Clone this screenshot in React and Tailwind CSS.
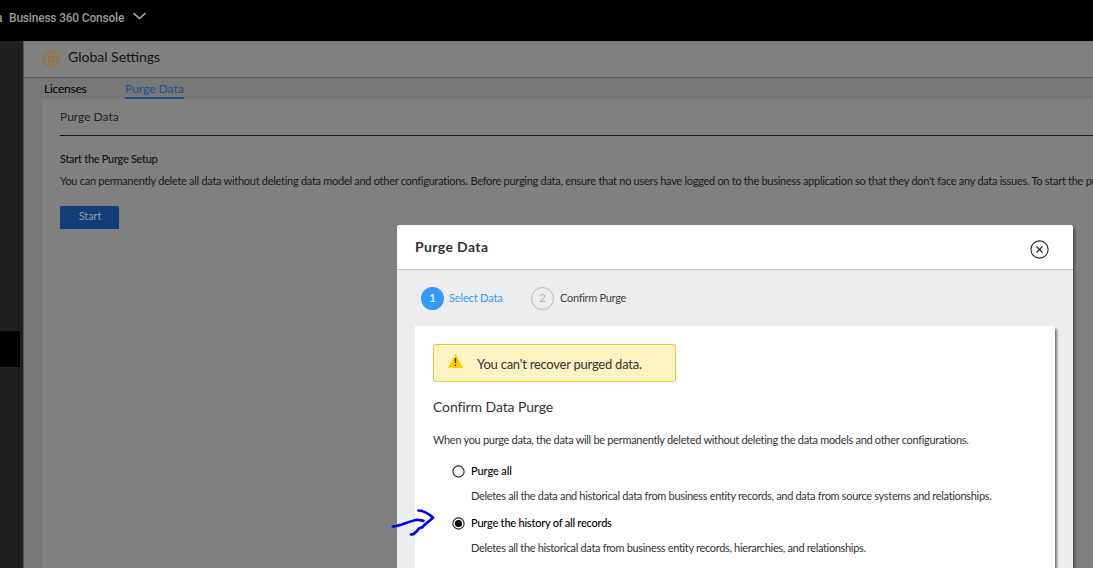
import { useState } from 'react';

const OPTIONS = [
  {
    id: 'all',
    label: 'Purge all',
    labelClass: 'tracking-[-0.1px]',
    text: 'Deletes all the data and historical data from business entity records, and data from source systems and relationships.',
    textClass: 'tracking-[-0.32px]',
  },
  {
    id: 'history',
    label: 'Purge the history of all records',
    labelClass: 'tracking-[-0.22px]',
    text: 'Deletes all the historical data from business entity records, hierarchies, and relationships.',
    textClass: 'tracking-[-0.33px]',
  },
];

function GearIcon() {
  return (
    <svg className="h-[18px] w-[18px] shrink-0" viewBox="0 0 18 18" fill="none" stroke="#a96d18" strokeWidth="1.1">
      <path d="M6.6 3.3a2.4 2.5 0 0 1 4.8 0a2.4 2.4 0 0 1 3.300 3.300a2.500 2.400 0 0 1 0 4.800a2.400 2.400 0 0 1 -3.300 3.300a2.400 2.500 0 0 1 -4.800 0a2.400 2.400 0 0 1 -3.300 -3.300a2.500 2.400 0 0 1 0 -4.800a2.400 2.400 0 0 1 3.300 -3.300z" />
      <circle cx="9" cy="9" r="2.7" />
    </svg>
  );
}

function Radio({ checked, onSelect }) {
  return (
    <button onClick={onSelect} className="mt-[2px] h-[13px] w-[13px] shrink-0">
      <svg viewBox="0 0 13 13" className="block h-[13px] w-[13px]">
        <circle cx="6.5" cy="6.5" r="5.6" fill="#fff" stroke="#222" strokeWidth="1.1" />
        {checked && <circle cx="6.5" cy="6.5" r="3.6" fill="#000" />}
      </svg>
    </button>
  );
}

function PurgeDialog() {
  const [selected, setSelected] = useState('history');

  return (
    <div className="absolute top-[225px] left-[397px] h-[343px] w-[676px] overflow-hidden rounded-t-[3px] bg-[#ededed] shadow-[2px_2px_3px_rgba(0,0,0,0.4)]">
      <div className="flex h-[45px] items-center justify-between border-b border-[#bdbdbd] bg-white pr-6 pl-[18px]">
        <h2 className="text-[14px] leading-5 font-bold tracking-[0.38px] text-[#333]">Purge Data</h2>
        <svg className="mt-1 h-[19px] w-[19px]" viewBox="0 0 19 19" fill="none" stroke="#222" strokeWidth="1.1">
          <circle cx="9.5" cy="9.5" r="8.6" />
          <path d="M6.5 6.5l6 6M12.5 6.5l-6 6" />
        </svg>
      </div>

      {/* Steps */}
      <div className="flex h-[56px] items-center pl-6 text-[11px] leading-4">
        <span className="flex h-[23px] w-[23px] items-center justify-center rounded-full bg-[#3399ff] text-[12px] text-white">1</span>
        <span className="ml-[5px] w-[82px] whitespace-nowrap tracking-[-0.15px] text-[#3399ff]">Select Data</span>
        <span className="flex h-[23px] w-[23px] items-center justify-center rounded-full border border-[#bbb] text-[12px] text-[#b5b5b5]">2</span>
        <span className="ml-[6px] whitespace-nowrap tracking-[-0.3px] text-[#444]">Confirm Purge</span>
      </div>

      <div className="ml-[18px] h-[260px] w-[640px] bg-white px-[18px] pt-[18px] shadow-[2px_3px_2px_#777]">
        <div className="flex h-[38px] w-[243px] items-center rounded-[3px] border border-[#f7c02c] bg-[#fbf3c1] pl-[14px]">
          <svg className="-mt-1 h-[14px] w-[15px]" viewBox="0 0 15 14">
            <path d="M7.5 0L15 14H0z" fill="#fdd000" />
            <path d="M7.5 4v5M7.5 10.5v1.5" stroke="#222" strokeWidth="1.3" />
          </svg>
          <span className="mt-px ml-[14px] whitespace-nowrap text-[13px] leading-4 tracking-[-0.24px] text-[#333]">You can't recover purged data.</span>
        </div>

        <h3 className="mt-[15px] text-[14px] leading-5 tracking-[-0.1px] text-[#333]">Confirm Data Purge</h3>
        <p className="mt-[15px] whitespace-nowrap text-[11px] leading-4 tracking-[-0.3px] text-[#333]">
          When you purge data, the data will be permanently deleted without deleting the data models and other configurations.
        </p>

        <div className="mt-[15px] pl-[19px]">
          {OPTIONS.map(o => (
            <div key={o.id} className="flex h-[52px] gap-[6px] text-[11px] leading-4 whitespace-nowrap">
              <Radio checked={selected === o.id} onSelect={() => setSelected(o.id)} />
              <div>
                <p className={`font-medium text-black ${o.labelClass}`}>{o.label}</p>
                <p className={`mt-[9px] text-[#333] ${o.textClass}`}>{o.text}</p>
              </div>
            </div>
          ))}
        </div>
      </div>
    </div>
  );
}

export default function App() {
  return (
    <div className="relative flex h-[568px] w-[1093px] flex-col overflow-hidden bg-[#808080] font-['Lato',sans-serif]">
      {/* Top bar */}
      <header className="flex h-[41px] shrink-0 items-start overflow-hidden bg-black pt-[9px] font-['Roboto',sans-serif] text-[12px] leading-[18px] font-medium text-[#999]">
        <span className="-ml-1 w-[13px]">a</span>
        <span className="whitespace-nowrap tracking-[-0.2px]">Business 360 Console</span>
        <svg className="mt-[3px] ml-[9px] h-2 w-[13px]" viewBox="0 0 13 8" fill="none" stroke="#a8a8a8" strokeWidth="1.6">
          <path d="M.5 1L6.5 6.5 12.5 1" />
        </svg>
      </header>

      <div className="flex min-h-0 flex-1">
        <aside className="w-6 shrink-0 border-r border-[#525252] bg-[#212121] pt-[290px]">
          <div className="h-9 w-5 bg-black" />
        </aside>

        <main className="flex min-w-0 flex-1 flex-col bg-[#777]">
          <div className="flex h-[37px] shrink-0 items-center gap-2 border-b border-[#5c5c5c] bg-[#808080] pl-[18px]">
            <GearIcon />
            <h1 className="-mt-1 text-[14px] leading-5 text-[#161616]">Global Settings</h1>
          </div>

          <nav className="flex h-[21px] shrink-0 items-start pt-[3px] pl-5 text-[12px] leading-4">
            <span className="w-[81px] tracking-[-0.25px] text-black">Licenses</span>
            <span className="h-[18px] w-[59px] border-b-2 border-[#1a4f8c] whitespace-nowrap text-[#264f94]">Purge Data</span>
          </nav>

          <section className="ml-[18px] flex-1 overflow-hidden bg-[#808080] pl-[18px]">
            <h2 className="h-[37px] border-b border-[#151515] pt-[10px] text-[12px] leading-4 text-[#252525]">Purge Data</h2>
            <h3 className="mt-[15px] text-[11px] leading-4 font-medium tracking-[-0.3px] text-[#111]">Start the Purge Setup</h3>
            <p className="mt-[6px] whitespace-nowrap text-[11px] leading-4 tracking-[-0.28px] text-[#1c1c1c]">
              You can permanently delete all data without deleting data model and other configurations. Before purging data, ensure that no users have logged on to the business application so that they don't face any data issues. To start the pu
            </p>
            <button className="mt-[17px] flex h-[23px] w-[59px] items-center justify-center rounded-[1px] bg-[#123d78] pb-[2px] pl-px text-[11px] tracking-[-0.1px] text-[#909caa]">
              Start
            </button>
          </section>
        </main>
      </div>

      <PurgeDialog />

      {/* Hand-drawn arrow pointing at the selected option */}
      <svg className="absolute top-[506px] left-[390px] h-[32px] w-[46px]" viewBox="0 0 46 32" fill="none" stroke="#0000ff" strokeWidth="2.7" strokeLinecap="round" strokeLinejoin="round">
        <path d="M2.700 20.500C9 20.500 18 15.500 26 14C29 13.600 31 14.500 33.500 14.800" />
        <path d="M28.500 4.500C34 4.500 39 8 43 11.800C39 15.500 35 18 32 21.500L29.500 22C27 24.500 25 28.500 21 28.500" />
      </svg>
    </div>
  );
}
